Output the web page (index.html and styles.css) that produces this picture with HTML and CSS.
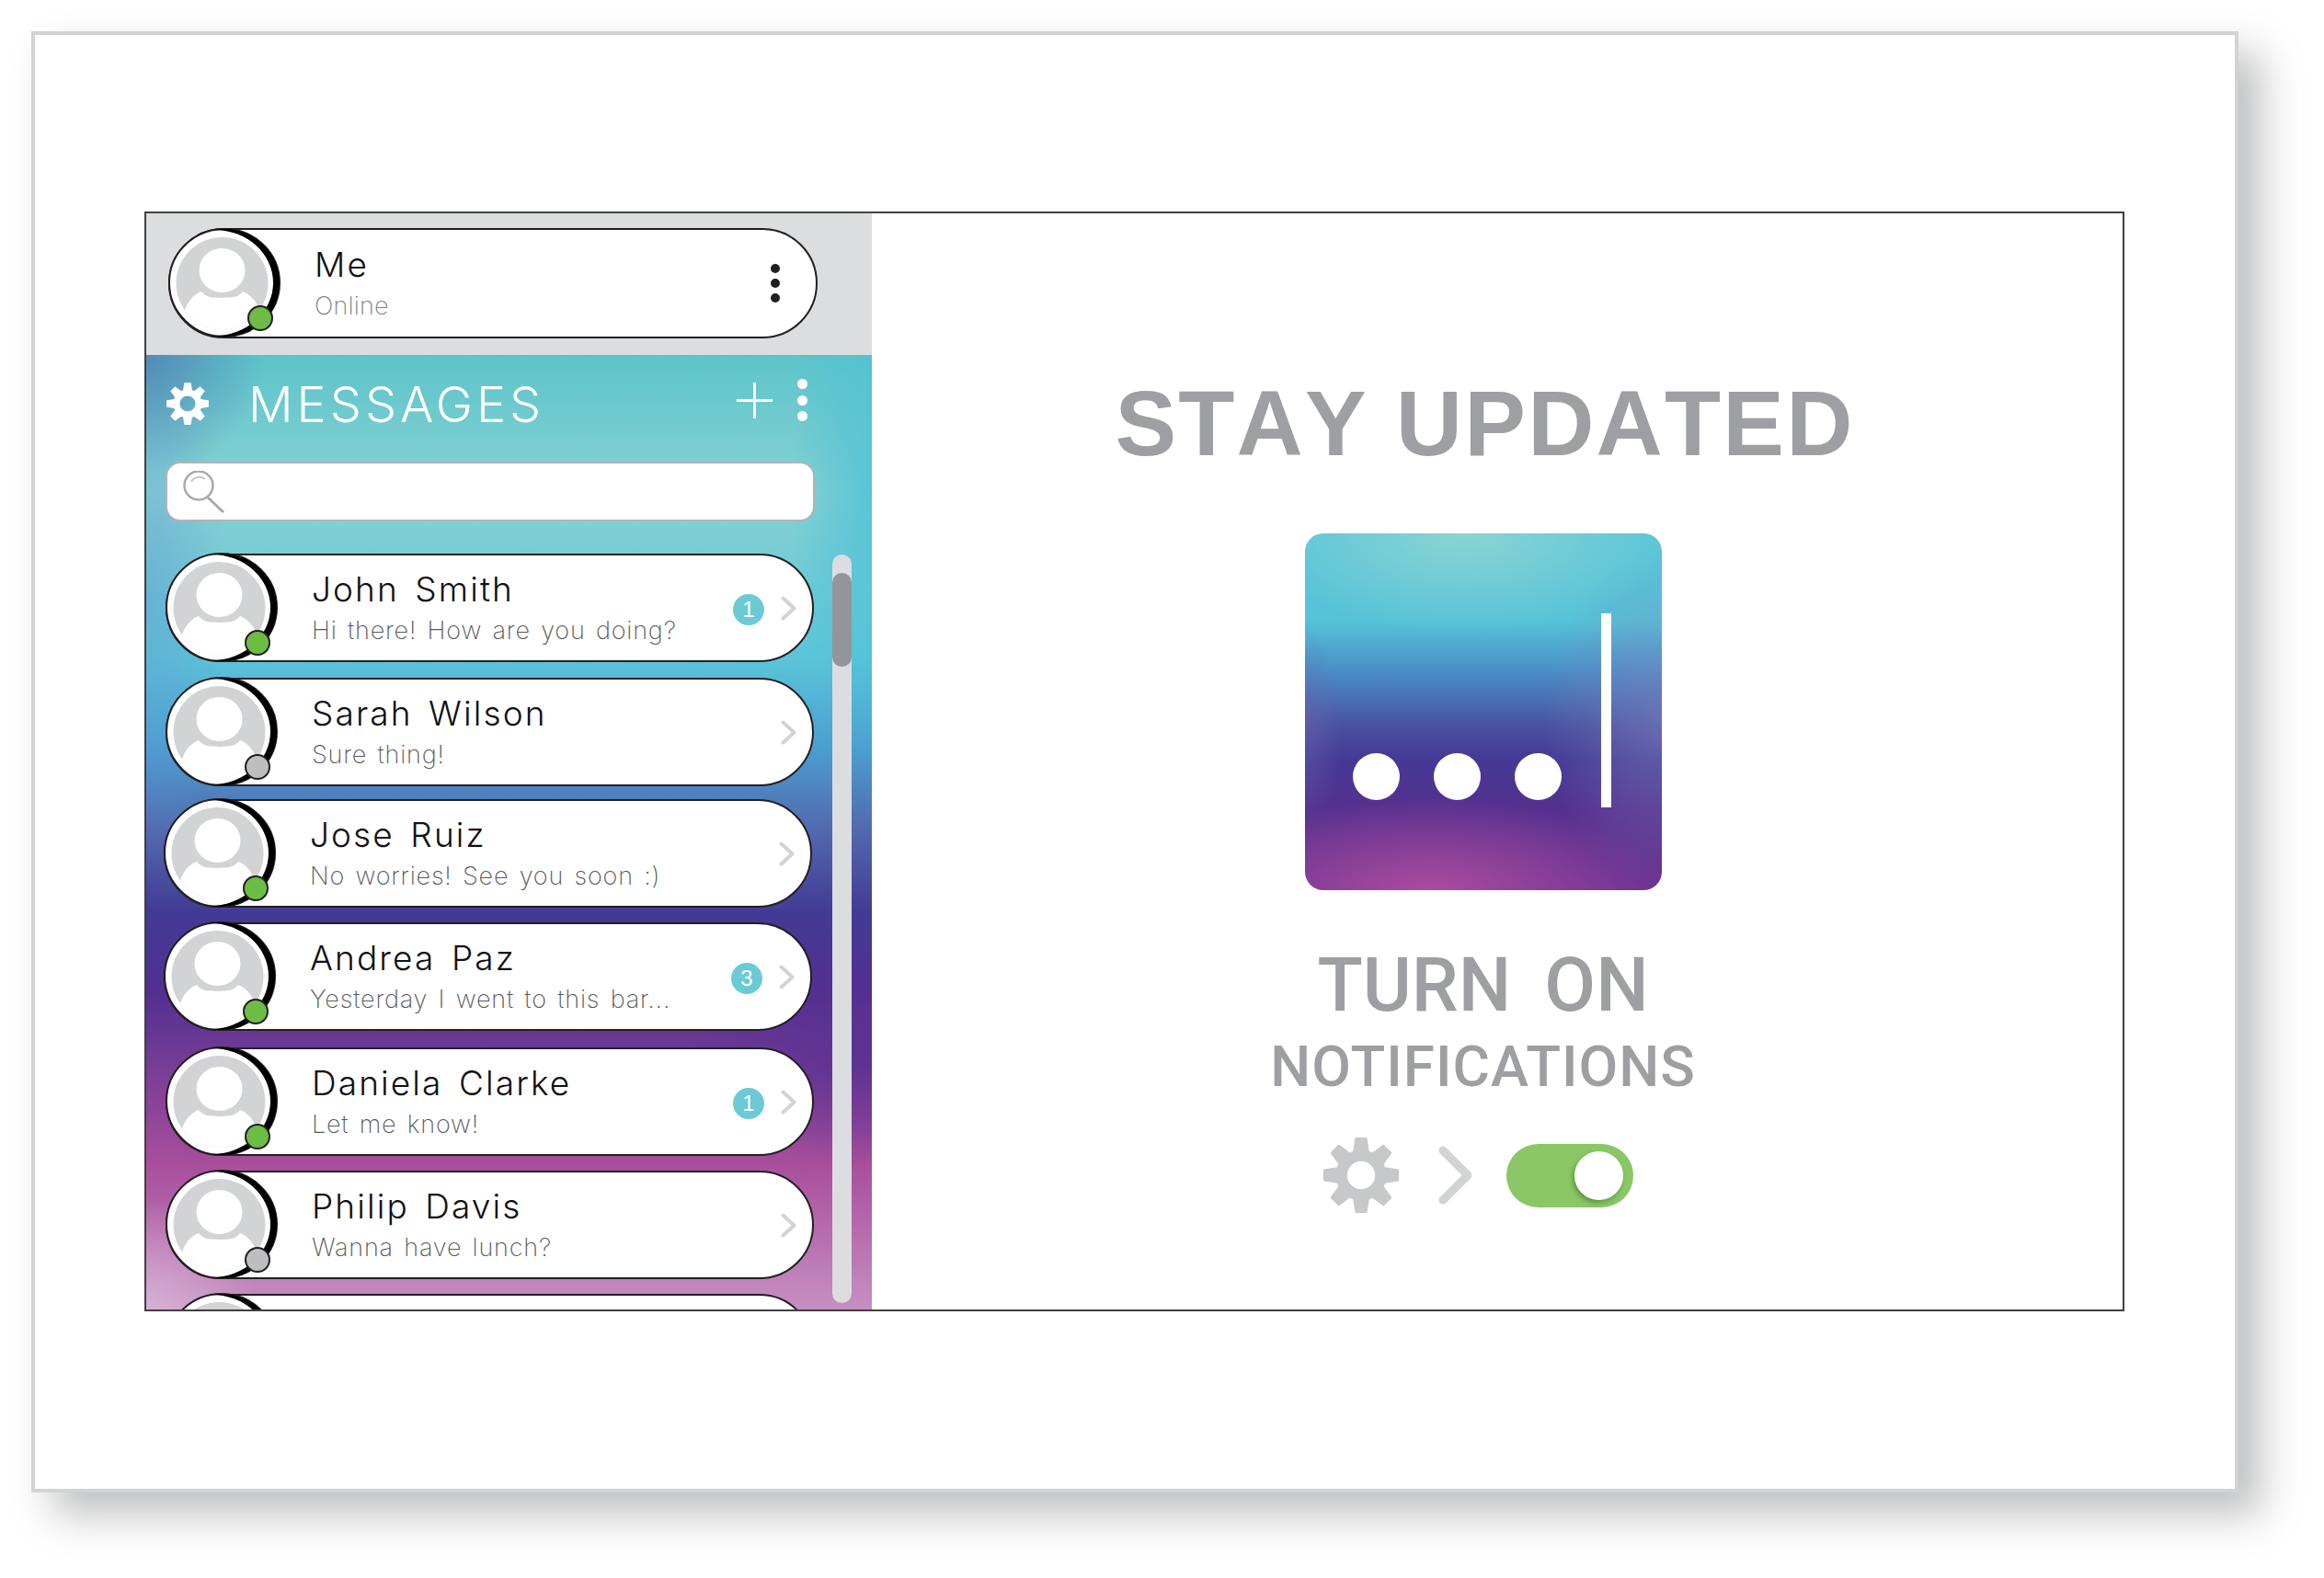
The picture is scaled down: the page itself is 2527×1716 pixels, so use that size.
FILE: index.html
```html
<html>
<head>
  <title>Stay updated</title>
  <link rel="stylesheet" href="styles.css">
</head>
<body>
  <!-- Shared icons -->
  <svg class="icon-defs">
    <clipPath id="disc-clip"><circle cx="58.5" cy="60" r="50"/></clipPath>
    <symbol id="gear" viewBox="0 0 100 100">
      <circle cx="50" cy="50" r="26" fill="none" stroke="currentColor" stroke-width="15"/>
      <g fill="currentColor" stroke="currentColor" stroke-width="2" stroke-linejoin="round">
        <path id="tooth" d="M43 1 L57 1 L60 20 L40 20 Z"/>
        <use href="#tooth" transform="rotate(45 50 50)"/>
        <use href="#tooth" transform="rotate(90 50 50)"/>
        <use href="#tooth" transform="rotate(135 50 50)"/>
        <use href="#tooth" transform="rotate(180 50 50)"/>
        <use href="#tooth" transform="rotate(225 50 50)"/>
        <use href="#tooth" transform="rotate(270 50 50)"/>
        <use href="#tooth" transform="rotate(315 50 50)"/>
      </g>
    </symbol>
    <symbol id="person" viewBox="0 0 122 120">
      <ellipse cx="61" cy="59.5" rx="60" ry="58.5" fill="#fff" stroke="#231f20" stroke-width="2"/>
      <path d="M50 1.99 A60 58.5 0 1 1 50 117.01 A64 57.51 0 0 0 50 1.99 Z" fill="#000"/>
      <circle cx="58.5" cy="60" r="50" fill="#d1d3d4"/>
      <ellipse cx="58.5" cy="46" rx="25" ry="24" fill="#fff"/>
      <path clip-path="url(#disc-clip)" d="M17 92 C21 79 28 72 36 69 C42 77 50 75 58.5 76 C67 75 75 77 81 69 C89 72 96 79 100 92 L100 120 L17 120 Z" fill="#fff"/>
    </symbol>
    <symbol id="chevron" viewBox="0 0 17 27">
      <path d="M2.5 2.5 L14.5 13.5 L2.5 24.5" fill="none" stroke="currentColor" stroke-width="4" stroke-linecap="round" stroke-linejoin="round"/>
    </symbol>
  </svg>

  <div class="sheet">
    <div class="panel">
      <!-- Message list -->
      <div class="sidebar">
        <div class="profile-bar">
          <div class="pill">
            <div class="avatar">
              <svg class="avatar-img"><use href="#person"/></svg>
              <span class="status online"></span>
            </div>
            <div class="pill-text">
              <div class="name">Me</div>
              <div class="sub sub-light">Online</div>
            </div>
            <div class="kebab kebab-dark"><i></i><i></i><i></i></div>
          </div>
        </div>

        <div class="messages">
          <div class="messages-head">
            <svg class="head-gear"><use href="#gear"/></svg>
            <div class="head-title">MESSAGES</div>
            <svg class="head-plus" viewBox="0 0 39 39"><path d="M19.5 0 V39 M0 19.5 H39" stroke="#fff" stroke-width="3"/></svg>
            <div class="kebab kebab-light"><i></i><i></i><i></i></div>
          </div>

          <div class="search">
            <svg class="search-icon" viewBox="0 0 46 46">
              <circle cx="17" cy="16" r="15.5" fill="none" stroke="#a7a9ac" stroke-width="2.5"/>
              <path d="M9 12 A10 10 0 0 1 24 9" fill="none" stroke="#c7c8ca" stroke-width="2"/>
              <path d="M27 29 L44 45" stroke="#a7a9ac" stroke-width="3"/>
            </svg>
          </div>

          <div class="list-wrap">
            <div class="list">
              <div class="pill row">
                <div class="avatar"><svg class="avatar-img"><use href="#person"/></svg><span class="status online"></span></div>
                <div class="pill-text"><div class="name">John Smith</div><div class="sub">Hi there! How are you doing?</div></div>
                <span class="unread">1</span>
                <svg class="chevron"><use href="#chevron"/></svg>
              </div>
              <div class="pill row">
                <div class="avatar"><svg class="avatar-img"><use href="#person"/></svg><span class="status away"></span></div>
                <div class="pill-text"><div class="name">Sarah Wilson</div><div class="sub">Sure thing!</div></div>
                <svg class="chevron"><use href="#chevron"/></svg>
              </div>
              <div class="pill row">
                <div class="avatar"><svg class="avatar-img"><use href="#person"/></svg><span class="status online"></span></div>
                <div class="pill-text"><div class="name">Jose Ruiz</div><div class="sub">No worries! See you soon :)</div></div>
                <svg class="chevron"><use href="#chevron"/></svg>
              </div>
              <div class="pill row">
                <div class="avatar"><svg class="avatar-img"><use href="#person"/></svg><span class="status online"></span></div>
                <div class="pill-text"><div class="name">Andrea Paz</div><div class="sub">Yesterday I went to this bar...</div></div>
                <span class="unread">3</span>
                <svg class="chevron"><use href="#chevron"/></svg>
              </div>
              <div class="pill row">
                <div class="avatar"><svg class="avatar-img"><use href="#person"/></svg><span class="status online"></span></div>
                <div class="pill-text"><div class="name">Daniela Clarke</div><div class="sub">Let me know!</div></div>
                <span class="unread">1</span>
                <svg class="chevron"><use href="#chevron"/></svg>
              </div>
              <div class="pill row">
                <div class="avatar"><svg class="avatar-img"><use href="#person"/></svg><span class="status away"></span></div>
                <div class="pill-text"><div class="name">Philip Davis</div><div class="sub">Wanna have lunch?</div></div>
                <svg class="chevron"><use href="#chevron"/></svg>
              </div>
              <div class="pill row">
                <div class="avatar"><svg class="avatar-img"><use href="#person"/></svg></div>
              </div>
            </div>
            <div class="scrollbar"><div class="scrollbar-thumb"></div></div>
          </div>
        </div>
      </div>

      <!-- Notification prompt -->
      <div class="prompt">
        <div class="prompt-title">STAY UPDATED</div>
        <div class="app-icon">
          <div class="app-dots"><i></i><i></i><i></i></div>
          <div class="app-bar"></div>
        </div>
        <div class="prompt-turn">TURN ON</div>
        <div class="prompt-notif">NOTIFICATIONS</div>
        <div class="prompt-controls">
          <svg class="prompt-gear"><use href="#gear"/></svg>
          <svg class="prompt-chevron" viewBox="0 0 37 64"><path d="M5 5 L32 32 L5 59" fill="none" stroke="#d1d3d4" stroke-width="9" stroke-linecap="round" stroke-linejoin="round"/></svg>
          <div class="toggle"><div class="toggle-knob"></div></div>
        </div>
      </div>
    </div>
  </div>
</body>
</html>
```

FILE: styles.css
```css
/* Page and the sheet with its drop shadow */
body {
  margin: 0;
  padding: 34px;
  background-color: white;
  font-family: "Liberation Sans", Arial, sans-serif;
}
.icon-defs {
  display: block;
  width: 0;
  height: 0;
}
.sheet {
  box-sizing: border-box;
  width: 2400px;
  height: 1589px;
  padding: 192px 0 0 119px;
  background-color: white;
  border: 4px solid #d1d3d4;
  box-shadow: 24px 24px 42px rgba(110, 112, 115, 0.45);
}
.panel {
  box-sizing: border-box;
  display: flex;
  width: 2153px;
  height: 1196px;
  border: 2px solid #414042;
}

/* Left column */
.sidebar {
  display: flex;
  flex-direction: column;
  width: 789px;
  overflow: hidden;
}
.profile-bar {
  flex: none;
  box-sizing: border-box;
  height: 154px;
  padding: 16px 0 0 24px;
  background-color: #dcddde;
}
.pill {
  box-sizing: border-box;
  display: flex;
  align-items: center;
  width: 706px;
  height: 120px;
  background-color: white;
  border: 2px solid #231f20;
  border-radius: 60px;
}
.avatar {
  position: relative;
  flex: none;
  width: 122px;
  height: 120px;
  margin: -2px 0 -2px -2px;
}
.avatar-img {
  display: block;
  width: 122px;
  height: 120px;
}
.status {
  position: absolute;
  left: 86px;
  top: 84px;
  box-sizing: border-box;
  width: 28px;
  height: 28px;
  border: 2px solid #231f20;
  border-radius: 50%;
}
.online {
  background-color: #6cbd45;
}
.away {
  background-color: #bcbec0;
}
.pill-text {
  flex: 1;
  min-width: 0;
  margin-left: 37px;
  font-family: Inter, "Liberation Sans", sans-serif;
  font-weight: 300;
}
.name {
  font-size: 37px;
  line-height: 44px;
  letter-spacing: 2.1px;
  word-spacing: 5px;
  color: #111;
}
.sub {
  margin-top: 6px;
  font-size: 27px;
  font-weight: 200;
  line-height: 34px;
  letter-spacing: 0.8px;
  word-spacing: 3px;
  color: #58595b;
}
.sub-light {
  letter-spacing: 0.2px;
  color: #808285;
}
.kebab {
  display: flex;
  flex: none;
  flex-direction: column;
  align-items: center;
}
.kebab i {
  display: block;
  border-radius: 50%;
}
.kebab-dark {
  gap: 6px;
  margin-right: 39px;
}
.kebab-dark i {
  width: 10px;
  height: 10px;
  background-color: #231f20;
}
.kebab-light {
  gap: 6.5px;
  margin: -8px 0 0 27px;
}
.kebab-light i {
  width: 11px;
  height: 11px;
  background-color: white;
}

/* Gradient part of the left column */
.messages {
  flex: 1;
  min-height: 0;
  padding: 30px 0 0 21px;
  background:
    radial-gradient(circle at 0 0, rgba(80, 120, 175, 0.75), rgba(80, 120, 175, 0) 130px),
    radial-gradient(ellipse 90px 300px at 0 260px, rgba(100, 150, 210, 0.45), rgba(100, 150, 210, 0)),
    radial-gradient(ellipse 90px 300px at 100% 150px, rgba(70, 190, 215, 0.7), rgba(70, 190, 215, 0)),
    radial-gradient(ellipse 200px 120px at 100% 760px, rgba(85, 47, 145, 0.8), rgba(85, 47, 145, 0)),
    radial-gradient(circle at 0 100%, rgba(225, 200, 225, 0.6), rgba(225, 200, 225, 0) 120px),
    linear-gradient(to bottom,
      #5cc4ca 0,
      #88d2d3 150px,
      #5ac5d8 330px,
      #4b9dd0 430px,
      #5267ad 520px,
      #423b95 605px,
      #522f90 690px,
      #6a3894 745px,
      #a84e9c 880px,
      #c68fc1 1037px);
}
.messages-head {
  display: flex;
  align-items: center;
  height: 46px;
  padding: 0 70px 0 1px;
}
.head-gear {
  flex: none;
  width: 46px;
  height: 46px;
  color: white;
}
.head-title {
  margin-left: 43px;
  font-family: Inter, "Liberation Sans", sans-serif;
  font-weight: 300;
  font-size: 54px;
  letter-spacing: 4px;
  color: white;
}
.head-plus {
  flex: none;
  width: 39px;
  height: 39px;
  margin: -7px 0 0 auto;
}
.search {
  box-sizing: border-box;
  display: flex;
  align-items: center;
  width: 706px;
  height: 65px;
  margin-top: 40px;
  padding-left: 17px;
  background-color: white;
  border: 2px solid #b1b3b6;
  border-radius: 16px;
}
.search-icon {
  width: 46px;
  height: 46px;
}
.list-wrap {
  display: flex;
  margin-top: 35px;
}
.list {
  flex: none;
  width: 705px;
}
.row {
  width: 705px;
  height: 118px;
  border-radius: 59px;
}
.row:nth-child(2) {
  margin-top: 17px;
}
.row:nth-child(3) {
  margin-top: 14px;
  transform: translateX(-2px);
}
.row:nth-child(4) {
  margin-top: 16px;
  transform: translateX(-2px);
}
.row:nth-child(5) {
  margin-top: 18px;
}
.row:nth-child(6),
.row:nth-child(7) {
  margin-top: 16px;
}
.unread {
  flex: none;
  width: 34px;
  height: 34px;
  margin: 4px 18px 0 0;
  border-radius: 50%;
  background-color: #6ccad6;
  font-size: 24px;
  line-height: 34px;
  text-align: center;
  color: white;
}
.chevron {
  flex: none;
  width: 17px;
  height: 27px;
  margin-right: 17px;
  color: #d1d3d4;
}
.scrollbar {
  flex: none;
  box-sizing: border-box;
  width: 21px;
  height: 814px;
  margin: 1px 0 0 20px;
  padding-top: 20px;
  background-color: #dcddde;
  border-radius: 11px;
}
.scrollbar-thumb {
  height: 102px;
  background-color: #939598;
  border-radius: 11px;
}

/* Right column */
.prompt {
  flex: 1;
  display: flex;
  flex-direction: column;
  align-items: center;
  padding: 178px 31px 0 0;
  color: #9d9fa2;
}
.prompt-title {
  margin-left: 4px;
  font-size: 100px;
  font-weight: bold;
  font-kerning: none;
  line-height: 100px;
  letter-spacing: 2.2px;
  white-space: nowrap;
}
.app-icon {
  flex: none;
  display: flex;
  align-items: flex-end;
  box-sizing: border-box;
  width: 388px;
  height: 388px;
  margin-top: 70px;
  padding: 0 55px 90px 52px;
  border-radius: 20px;
  background:
    radial-gradient(ellipse 230px 110px at 45% 0, rgba(138, 212, 212, 1), rgba(138, 212, 212, 0)),
    radial-gradient(ellipse 260px 100px at 35% 100%, rgba(170, 75, 158, 1), rgba(170, 75, 158, 0)),
    radial-gradient(ellipse 130px 180px at 100% 52%, rgba(130, 130, 190, 0.55), rgba(130, 130, 190, 0)),
    radial-gradient(ellipse 40px 110px at 0 55%, rgba(110, 100, 175, 0.5), rgba(110, 100, 175, 0)),
    linear-gradient(to bottom,
      #5ac5d8 0,
      #55c2d8 96px,
      #4a90c8 148px,
      #4a4f9f 211px,
      #433a95 246px,
      #55308f 298px,
      #6a3392 388px);
}
.app-dots {
  display: flex;
  gap: 37px;
  margin-bottom: 8px;
}
.app-dots i {
  display: block;
  width: 51px;
  height: 51px;
  border-radius: 50%;
  background-color: white;
}
.app-bar {
  width: 11px;
  height: 211px;
  margin-left: 43px;
  background-color: white;
}
.prompt-turn {
  margin-top: 63px;
  font-family: Roboto, "Liberation Sans", sans-serif;
  font-weight: 500;
  font-size: 81px;
  line-height: 81px;
  word-spacing: 16px;
  white-space: nowrap;
}
.prompt-notif {
  margin-top: 17px;
  font-family: Roboto, "Liberation Sans", sans-serif;
  font-weight: 500;
  font-size: 62px;
  line-height: 62px;
  letter-spacing: 1px;
  white-space: nowrap;
}
.prompt-controls {
  display: flex;
  align-items: center;
  margin: 46px 0 0 -11px;
}
.prompt-gear {
  width: 82px;
  height: 82px;
  color: #c7c8ca;
}
.prompt-chevron {
  width: 37px;
  height: 64px;
  margin-left: 43px;
}
.toggle {
  display: flex;
  align-items: center;
  justify-content: flex-end;
  box-sizing: border-box;
  width: 138px;
  height: 69px;
  margin-left: 37px;
  padding-right: 11px;
  background-color: #8ac765;
  border-radius: 35px;
}
.toggle-knob {
  width: 53px;
  height: 53px;
  background-color: white;
  border-radius: 50%;
  box-shadow: -2px 3px 5px rgba(40, 90, 30, 0.45);
}
```
